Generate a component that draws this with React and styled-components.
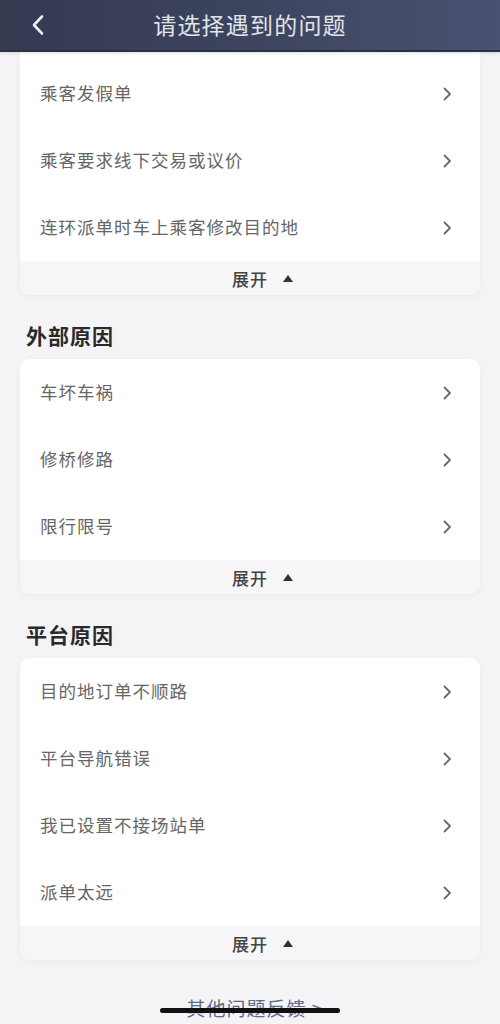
import React from "react";
import styled, { createGlobalStyle } from "styled-components";

const Global = createGlobalStyle`
  html, body { margin: 0; padding: 0; background: #f4f4f6; }
  body { font-family: "Noto Sans CJK SC", "Noto Sans", sans-serif; }
  * { box-sizing: border-box; }
`;

const Page = styled.div`
  width: 500px;
  height: 1024px;
  overflow: hidden;
  background: #f4f4f6;
  position: relative;
  display: flex;
  flex-direction: column;
`;

const Header = styled.header`
  height: 52px;
  flex: none;
  background: linear-gradient(90deg, #343a50 0%, #3d445e 50%, #4a5272 100%);
  border-bottom: 2px solid #2c3042;
  display: flex;
  align-items: center;
  justify-content: center;
  position: relative;
  z-index: 2;
  box-shadow: 0 1px 3px rgba(0, 0, 0, 0.15);
`;

const Back = styled.div`
  position: absolute;
  left: 29px;
  top: 13px;
  width: 18px;
  height: 24px;
  display: flex;
  align-items: center;
  justify-content: center;
`;

const Title = styled.h1`
  margin: 0;
  font-size: 23px;
  font-weight: 400;
  color: #e2e4ec;
  letter-spacing: 1.2px;
  margin-top: -3px;
`;

const Content = styled.div`
  padding: 0 20px;
  display: flex;
  flex-direction: column;
`;

const Card = styled.div`
  background: #fff;
  border-radius: ${(p) => (p.$cut ? "0 0 10px 10px" : "10px")};
  box-shadow: 0 2px 6px rgba(0, 0, 0, 0.04);
  overflow: hidden;
  padding-top: ${(p) => (p.$cut ? "8px" : "0")};
`;

const Row = styled.div`
  height: 67px;
  display: flex;
  align-items: center;
  justify-content: space-between;
  padding-left: 20px;
  padding-right: 28px;
`;

const RowText = styled.span`
  font-size: 17.5px;
  color: #666;
  letter-spacing: 1px;
  margin-top: -2px;
`;

const Expand = styled.div`
  height: 34px;
  background: #f6f6f8;
  display: flex;
  align-items: center;
  justify-content: center;
  gap: 14px;
  padding-left: 26px;
  font-size: 17px;
  color: #444;
  font-weight: 500;
  letter-spacing: 1px;
`;

const SectionTitle = styled.h2`
  margin: 0;
  height: 64px;
  display: flex;
  align-items: center;
  padding-left: 6px;
  padding-top: 16px;
  font-size: 21px;
  font-weight: 700;
  color: #2a2a2a;
  letter-spacing: 1px;
`;

const Footer = styled.div`
  margin-top: 34px;
  text-align: center;
  font-size: 19px;
  color: #5d6b8a;
  letter-spacing: 1px;
  padding-left: 10px;
`;

const HomeBar = styled.div`
  position: absolute;
  left: 160px;
  top: 1008px;
  width: 180px;
  height: 5px;
  border-radius: 3px;
  background: #111;
`;

const Chevron = () => (
  <svg width="9" height="14" viewBox="0 0 9 14">
    <path d="M1.5 1.5 L7 7 L1.5 12.5" fill="none" stroke="#6a6a6a" strokeWidth="1.8" strokeLinecap="round" strokeLinejoin="round" />
  </svg>
);

const Tri = () => (
  <svg width="12" height="9" viewBox="0 0 12 9">
    <path d="M6 1 L11 8 L1 8 Z" fill="#333" />
  </svg>
);

const sections = [
  { title: null, items: ["乘客发假单", "乘客要求线下交易或议价", "连环派单时车上乘客修改目的地"] },
  { title: "外部原因", items: ["车坏车祸", "修桥修路", "限行限号"] },
  { title: "平台原因", items: ["目的地订单不顺路", "平台导航错误", "我已设置不接场站单", "派单太远"] },
];

export default function App() {
  return (
    <Page>
      <Global />
      <Header>
        <Back>
          <svg width="14" height="22" viewBox="0 0 14 22">
            <path d="M11 2.5 L3 11 L11 19.5" fill="none" stroke="#f0f0f4" strokeWidth="2.6" strokeLinecap="round" strokeLinejoin="round" />
          </svg>
        </Back>
        <Title>请选择遇到的问题</Title>
      </Header>
      <Content>
        {sections.map((s, i) => (
          <React.Fragment key={i}>
            {s.title && <SectionTitle>{s.title}</SectionTitle>}
            <Card $cut={i === 0}>
              {s.items.map((t) => (
                <Row key={t}>
                  <RowText>{t}</RowText>
                  <Chevron />
                </Row>
              ))}
              <Expand>
                <span>展开</span>
                <Tri />
              </Expand>
            </Card>
          </React.Fragment>
        ))}
        <Footer>其他问题反馈 &gt;</Footer>
      </Content>
      <HomeBar />
    </Page>
  );
}
